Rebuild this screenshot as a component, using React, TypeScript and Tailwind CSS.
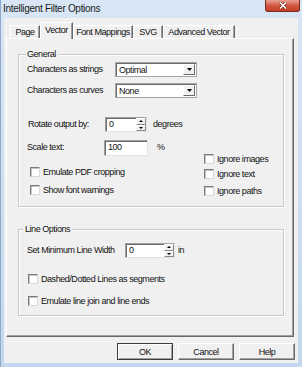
const font = "font-['Liberation_Sans',Arial,sans-serif]";

const Tri = ({ up = false, w = 5 }: { up?: boolean; w?: number }) => (
  <svg width={w} height={Math.ceil(w / 2)} viewBox={`0 0 ${w} ${Math.ceil(w / 2)}`} className="block">
    <polygon
      points={up ? `0,${Math.ceil(w / 2)} ${w},${Math.ceil(w / 2)} ${w / 2},0` : `0,0 ${w},0 ${w / 2},${Math.ceil(w / 2)}`}
      fill="#000"
    />
  </svg>
);

const Select = ({ value }: { value: string }) => (
  <div className="flex h-[15px] w-[82px] items-stretch border border-[#a5a5a5] bg-white shadow-[inset_1px_1px_0_#6b6b6b]">
    <span className="flex-1 pl-[3px] pt-[1px] leading-[12px]">{value}</span>
    <div className="my-[1px] mr-[1px] flex w-[12px] items-center justify-center border border-t-white border-l-white border-r-[#696969] border-b-[#696969] bg-[#f0f0f0]">
      <Tri />
    </div>
  </div>
);

const Spin = ({ value, width }: { value: string; width: string }) => (
  <div className={`flex h-[15px] ${width} items-stretch border border-t-[#a0a0a0] border-l-[#a0a0a0] border-r-[#e3e3e3] border-b-[#e3e3e3] bg-white shadow-[inset_1px_1px_0_#6b6b6b]`}>
    <span className="flex-1 pl-[3px] leading-[12px]">{value}</span>
    <div className="flex w-[10px] flex-col">
      <div className="flex flex-1 items-center justify-center border border-t-white border-l-white border-r-[#8a8a8a] border-b-[#8a8a8a] bg-[#f0f0f0]">
        <Tri up w={4} />
      </div>
      <div className="flex flex-1 items-center justify-center border border-t-white border-l-white border-r-[#8a8a8a] border-b-[#8a8a8a] bg-[#f0f0f0]">
        <Tri w={4} />
      </div>
    </div>
  </div>
);

const Check = ({ label, ml = "ml-[3px]" }: { label: string; ml?: string }) => (
  <div className={`flex h-[10px] items-center ${ml}`}>
    <span className="h-[10px] w-[10px] border border-t-[#7a7a7a] border-l-[#7a7a7a] border-r-[#d8d8d8] border-b-[#d8d8d8] bg-white shadow-[inset_1px_1px_0_#c4c4c4]" />
    <span className="ml-[3px] leading-[10px]">{label}</span>
  </div>
);

const Tab = ({ label, w, active = false }: { label: string; w: string; active?: boolean }) => (
  <div
    className={`${w} flex items-center justify-center border-t border-l border-t-white border-l-white border-r border-r-[#696969] bg-[#f0f0f0] shadow-[inset_-1px_0_0_#a0a0a0] ${
      active ? "relative z-10 -mb-[1px] h-[17px] pb-[2px]" : "h-[13px]"
    }`}
  >
    <span className="leading-[10px]">{label}</span>
  </div>
);

const Button = ({ label, def = false }: { label: string; def?: boolean }) => (
  <div
    className={`flex h-[17px] w-[56px] items-center justify-center border bg-[#f0f0f0] ${
      def
        ? "border-[#3c3c3c] shadow-[inset_1px_1px_0_#fff,inset_-1px_-1px_0_#a0a0a0]"
        : "border-t-white border-l-white border-r-[#696969] border-b-[#696969] shadow-[inset_-1px_-1px_0_#a0a0a0]"
    }`}
  >
    <span className="leading-[10px]">{label}</span>
  </div>
);

export default function App() {
  return (
    <div className={`flex h-[367px] w-[302px] flex-col border-l border-[#8fa9c8] bg-gradient-to-b from-[#d8e6f5] to-[#c4d7ee] ${font} text-[9px] tracking-[-0.45px] text-[#111]`}>
      {/* title bar */}
      <div className="flex h-[18px] items-start">
        <span className="ml-[2px] pt-[3px] text-[10px] leading-[11px] tracking-[-0.3px] text-[#1a1a1a]">Intelligent Filter Options</span>
        <div className="ml-auto mr-[2px] flex h-[12px] w-[35px] items-center justify-center rounded-b-[3px] border border-t-0 border-[#7d2a1f] bg-gradient-to-b from-[#e8a093] via-[#d35842] to-[#c23c25]">
          <svg width="8" height="7" viewBox="0 0 8 7">
            <path d="M1 0.5 L7 6.5 M7 0.5 L1 6.5" stroke="#5a1a10" strokeWidth="2.6" />
            <path d="M1 0.5 L7 6.5 M7 0.5 L1 6.5" stroke="#fff" strokeWidth="1.6" />
          </svg>
        </div>
      </div>

      {/* dialog body */}
      <div className="ml-[3px] mr-[4px] flex h-[345px] flex-col bg-[#f0f0f0]">
        <div className="flex h-[20px] items-end pl-[6px]">
          <Tab label="Page" w="w-[30px]" />
          <Tab label="Vector" w="w-[33px]" active />
          <Tab label="Font Mappings" w="w-[60px]" />
          <Tab label="SVG" w="w-[30px]" />
          <Tab label="Advanced Vector" w="w-[72px]" />
        </div>

        <div className="ml-[2px] h-[299px] w-[288px] border border-t-white border-l-white border-r-[#696969] border-b-[#696969] pl-[11px] pt-[15px] shadow-[inset_-1px_-1px_0_#a0a0a0]">
          {/* General */}
          <div className="relative h-[153px] w-[266px] border border-[#c8c8c8] pl-[8px] pt-[7px] shadow-[inset_1px_1px_0_#fff,1px_1px_0_#fff]">
            <span className="absolute -top-[6px] left-[6px] bg-[#f0f0f0] px-[2px] leading-[10px]">General</span>
            <div className="flex h-[15px] items-center">
              <span className="w-[88px]">Characters as strings</span>
              <Select value="Optimal" />
            </div>
            <div className="mt-[6px] flex h-[15px] items-center">
              <span className="w-[88px]">Characters as curves</span>
              <Select value="None" />
            </div>
            <div className="mt-[19px] flex h-[15px] items-center">
              <span className="ml-[1px] w-[77px]">Rotate output by:</span>
              <Spin value="0" width="w-[42px]" />
              <span className="ml-[6px]">degrees</span>
            </div>
            <div className="mt-[8px] flex">
              <div className="w-[177px]">
                <div className="flex h-[16px] items-center">
                  <span className="w-[77px]">Scale text:</span>
                  <div className="h-[16px] w-[44px] border border-t-[#a0a0a0] border-l-[#a0a0a0] border-r-[#e3e3e3] border-b-[#e3e3e3] bg-white pl-[3px] leading-[12px] shadow-[inset_1px_1px_0_#6b6b6b]">
                    100
                  </div>
                  <span className="ml-[9px]">%</span>
                </div>
                <div className="mt-[11px]">
                  <Check label="Emulate PDF cropping" />
                </div>
                <div className="mt-[8px]">
                  <Check label="Show font warnings" />
                </div>
              </div>
              <div className="mt-[14px]">
                <Check label="Ignore images" ml="ml-0" />
                <div className="mt-[5px]">
                  <Check label="Ignore text" ml="ml-0" />
                </div>
                <div className="mt-[7px]">
                  <Check label="Ignore paths" ml="ml-0" />
                </div>
              </div>
            </div>
          </div>

          {/* Line Options */}
          <div className="relative mt-[22px] h-[87px] w-[266px] border border-[#c8c8c8] pl-[8px] pt-[13px] shadow-[inset_1px_1px_0_#fff,1px_1px_0_#fff]">
            <span className="absolute -top-[6px] left-[4px] bg-[#f0f0f0] px-[2px] leading-[10px]">Line Options</span>
            <div className="flex h-[15px] items-center">
              <span className="w-[98px]">Set Minimum Line Width</span>
              <Spin value="0" width="w-[50px]" />
              <span className="ml-[3px]">in</span>
            </div>
            <div className="mt-[16px]">
              <Check label="Dashed/Dotted Lines as segments" ml="ml-[1px]" />
            </div>
            <div className="mt-[12px]">
              <Check label="Emulate line join and line ends" ml="ml-[1px]" />
            </div>
          </div>
        </div>

        <div className="mt-[6px] flex justify-end gap-[5px] pr-[3px]">
          <Button label="OK" def />
          <Button label="Cancel" />
          <Button label="Help" />
        </div>
      </div>
    </div>
  );
}
